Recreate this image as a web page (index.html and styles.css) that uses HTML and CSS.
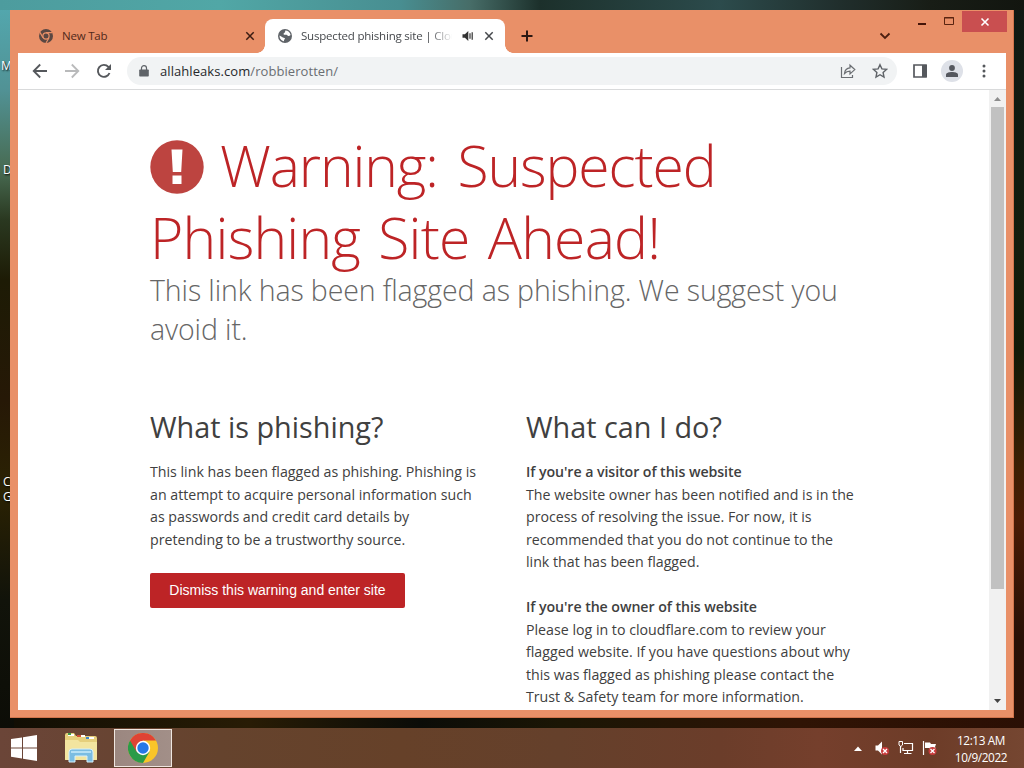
FILE: index.html
```html
<!DOCTYPE html>
<html lang="en">
<head>
  <meta charset="UTF-8" />
  <title>Suspected phishing site | Cloudflare</title>
  <link rel="stylesheet" href="styles.css">
</head>
<body>
  <!-- Desktop icon labels, mostly behind the window -->
  <span class="label label-m">M</span>
  <span class="label label-d">D</span>
  <span class="label label-c">C</span>
  <span class="label label-g">G</span>

  <div class="window">
    <div class="tabs">
      <div class="tab">
        <svg class="favicon" viewBox="0 0 16 16"><circle cx="8" cy="8" r="7" fill="#5a4742"/><circle cx="8" cy="8" r="3.1" fill="#5a4742" stroke="#e99068" stroke-width="1.2"/><path d="M8 4.6h6.2M5 9.8L2 4.4M11 9.8L8 15" stroke="#e99068" stroke-width="1.2"/></svg>
        <span class="tab-title">New Tab</span>
        <svg class="tab-close" viewBox="0 0 10 10"><path d="M1.3 1.3l7.4 7.4M8.7 1.3L1.3 8.7" stroke="#3b1c12" stroke-width="1.5"/></svg>
      </div>
      <div class="tab active">
        <svg class="favicon" viewBox="0 0 16 16"><circle cx="8" cy="8" r="7" fill="#5f6368"/><path d="M8.2 2.4c2.8 0 5 1.9 5.4 4.7-.9.7-1.5 1.1-2.4.9-.9-.2-.8-1.1-1.7-1.2H7.6c-.8 0-1.2-.7-.9-1.4.2-.6 1.3-.6 1.4-1.4zM2.6 7.5l3.3 1.9c.5.3 1.1.3 1.6.5.6.2.6 1 .1 1.3-.4.3-.6.7-.6 1.2v.9C4.3 12.8 2.3 10.5 2.6 7.5z" fill="#fff"/></svg>
        <span class="tab-title fade">Suspected phishing site | Cloudflare</span>
        <svg class="sound" viewBox="0 0 12 12"><path d="M.5 4.3h2.4L6.3 1v10L2.9 7.700H.5z" fill="#333"/><path d="M8 3.300v5.400M10.200 2.200v7.600" stroke="#333" stroke-width="1.200"/></svg>
        <svg class="tab-close" viewBox="0 0 10 10"><path d="M1.300 1.300l7.400 7.400M8.700 1.300L1.300 8.700" stroke="#45484c" stroke-width="1.500"/></svg>
      </div>
      <svg class="new-tab" viewBox="0 0 12 12"><path d="M6 .5v11M.5 6h11" stroke="#2b1712" stroke-width="2"/></svg>
      <svg class="tab-search" viewBox="0 0 12 8"><path d="M1.500 1.500L6 6l4.500-4.500" fill="none" stroke="#4c1f10" stroke-width="1.800"/></svg>
      <div class="controls">
        <svg class="min" viewBox="0 0 30 21"><path d="M4 13h8" stroke="#451408" stroke-width="2"/></svg>
        <svg class="max" viewBox="0 0 26 21"><path d="M.5 6.500h9v7h-9z M0 7h10" fill="none" stroke="#5a2410"/></svg>
        <div class="close"><svg viewBox="0 0 10 10"><path d="M1.500 1.500l7 7M8.500 1.500l-7 7" stroke="#fff" stroke-width="1.600"/></svg></div>
      </div>
    </div>

    <div class="toolbar">
      <svg class="nav" viewBox="0 0 16 16"><path d="M15 8H2M8.200 1.500L1.700 8l6.500 6.500" fill="none" stroke="#55585c" stroke-width="1.800"/></svg>
      <svg class="nav" viewBox="0 0 16 16"><path d="M1 8h13M7.800 1.500L14.300 8l-6.500 6.500" fill="none" stroke="#b9babb" stroke-width="1.800"/></svg>
      <svg class="nav" viewBox="0 0 16 16"><path d="M13.500 10A6 6 0 1 1 12.400 3.900L14 5.500" fill="none" stroke="#55585c" stroke-width="1.900"/><path d="M15 1v6H9z" fill="#55585c"/></svg>
      <div class="address">
        <svg class="lock" viewBox="0 0 10 12"><path d="M1 4.500h8q.8 0 .8.800v5.400q0 .8-.8.800H1q-.8 0-.8-.8V5.300q0-.8.8-.8z" fill="#5f6368"/><path d="M2.500 5V3.100a2.500 2.500 0 0 1 5 0V5" fill="none" stroke="#5f6368" stroke-width="1.200"/></svg>
        <span class="url">allahleaks.com<span class="path">/robbierotten/</span></span>
        <svg class="share" viewBox="0 0 16 16"><path d="M1.500 4v10.500h11V12" fill="none" stroke="#6b6e72" stroke-width="1.200"/><path d="M4.500 10.500c.4-3.600 2.400-5.400 5.500-5.600V2.200L14.800 6.600 10 11V8.200c-2.300 0-4 .6-5.500 2.300z" fill="none" stroke="#6b6e72" stroke-width="1.200"/></svg>
        <svg class="star" viewBox="0 0 16 16"><path d="M8 1.700l1.900 4.200 4.600.5-3.400 3.100.9 4.500L8 11.700 4 14l.9-4.500L1.500 6.400l4.600-.5z" fill="none" stroke="#5f6368" stroke-width="1.400"/></svg>
      </div>
      <svg class="panel" viewBox="0 0 14 14"><path d="M1 1h12v12H1z" fill="#fff" stroke="#55585d" stroke-width="1.700"/><path d="M9 1h5v12H9z" fill="#55585d"/></svg>
      <div class="avatar"><svg viewBox="0 0 12 12"><circle cx="6" cy="3" r="2.900" fill="#55585f"/><path d="M0 12V9.800C0 7.800 3 7 6 7s6 .8 6 2.800V12z" fill="#55585f"/></svg></div>
      <svg class="dots" viewBox="0 0 4 14"><g fill="#55585c"><circle cx="2" cy="2" r="1.500"/><circle cx="2" cy="7" r="1.500"/><circle cx="2" cy="12" r="1.500"/></g></svg>
    </div>

    <div class="view">
      <div class="page">
        <h1>
          <svg class="alert" viewBox="0 0 54 54"><circle cx="27" cy="27" r="26.700" fill="#bd4440"/><path d="M21.500 9.500h11l-1.300 22.500h-8.400zM22.500 35.500h9V44h-9z" fill="#fff"/></svg><span class="warn">Warning: Suspected</span><br>
          <span class="ahead">Phishing Site Ahead!</span>
        </h1>
        <h2 class="subtitle">This link has been flagged as phishing. We suggest you<br>avoid it.</h2>
        <div class="columns">
          <div class="column">
            <h2>What is phishing?</h2>
            <p>This link has been flagged as phishing. Phishing is<br>an attempt to acquire personal information such<br>as passwords and credit card details by<br>pretending to be a trustworthy source.</p>
            <button class="dismiss">Dismiss this warning and enter site</button>
          </div>
          <div class="column">
            <h2>What can I do?</h2>
            <p><strong>If you're a visitor of this website</strong><br>The website owner has been notified and is in the<br>process of resolving the issue. For now, it is<br>recommended that you do not continue to the<br>link that has been flagged.</p>
            <p><strong>If you're the owner of this website</strong><br>Please log in to cloudflare.com to review your<br>flagged website. If you have questions about why<br>this was flagged as phishing please contact the<br>Trust &amp; Safety team for more information.</p>
          </div>
        </div>
      </div>
      <div class="scrollbar">
        <svg viewBox="0 0 17 17"><path d="M5 11l3.500-4 3.500 4z" fill="#8d8d8d"/></svg>
        <div class="thumb"></div>
        <svg viewBox="0 0 17 17"><path d="M5 6l3.500 4L12 6z" fill="#444"/></svg>
      </div>
    </div>
  </div>

  <div class="taskbar">
    <svg class="start" viewBox="0 0 26 26"><path d="M0 4l11-1.600v10H0zM12 2.200L26 0v12.400H12zM0 13.400h11v10L0 21.800zM12 13.400h14V26l-14-2.200z" fill="#fff"/></svg>
    <svg class="explorer" viewBox="0 0 34 32">
      <path d="M1 3q0-2 2-2h7l2 3h19q2 0 2 2v22H1z" fill="#e6cf7c"/>
      <path d="M4 3h6M15 4h6M24 6h6" stroke="#fff" stroke-width="2"/>
      <path d="M4 2h3" stroke="#3d9b48" stroke-width="2"/><path d="M13 4h4" stroke="#cf5138" stroke-width="2"/><path d="M22 6h3" stroke="#3f86c8" stroke-width="2"/>
      <path d="M1 8h13l2 2h17v17q0 1-1 1H2q-1 0-1-1z" fill="#f3e5a0"/>
      <path d="M5 30V20q0-3 3-3h18q3 0 3 3v10h-6v-6H11v6z" fill="#7bbde2" stroke="#d7f0fb"/>
      <path d="M7 20h20" stroke="#b6e0f4" stroke-width="2"/>
    </svg>
    <div class="task">
      <svg viewBox="0 0 30 30"><circle cx="15" cy="15" r="15" fill="#f9c529"/><path d="M15 15L2 7.500A15 15 0 0 0 15 30l6.500-11.200z" fill="#2b9b48"/><path d="M2 7.500A15 15 0 0 1 28 7.500H15v7.500L8.500 18.800z" fill="#df4334"/><circle cx="15" cy="15" r="7.200" fill="#fff"/><circle cx="15" cy="15" r="5.700" fill="#2678e6"/></svg>
    </div>
    <div class="tray">
      <svg class="up" viewBox="0 0 8 5"><path d="M0 5l4-4.500L8 5z" fill="#fff"/></svg>
      <svg class="tray-icon" viewBox="0 0 16 16"><path d="M1.500 5.500H4L8 1.500v13L4 10.500H1.500z" fill="#fff"/><circle cx="11" cy="11" r="4" fill="#c83b3b"/><path d="M9 9l4 4M13 9l-4 4" stroke="#fff" stroke-width="1.300"/></svg>
      <svg class="tray-icon" viewBox="0 0 16 16"><path d="M6 3.500h8.500v7H5V8M9.500 10.500V13M6 13.500h7.500M2.500 6v7" fill="none" stroke="#fff" stroke-width="1.200"/><path d="M1 1.500h3.500V5L2.800 6.500 1 5z" fill="none" stroke="#fff"/></svg>
      <svg class="tray-icon" viewBox="0 0 16 16"><path d="M1.500 1v14" stroke="#fff" stroke-width="1.200"/><path d="M3 2.500h5l1 1.500h5l-1 3 1 2H8L7 8H3z" fill="#fff"/><circle cx="10.500" cy="11" r="4" fill="#c83b3b"/><path d="M8.500 9l4 4M12.500 9l-4 4" stroke="#fff" stroke-width="1.300"/></svg>
      <div class="clock">12:13 AM<br>10/9/2022</div>
    </div>
  </div>
</body>
</html>
```
FILE: styles.css
```css
* {
  margin: 0;
  padding: 0;
  box-sizing: border-box;
}

html, body {
  height: 100%;
}

body {
  display: flex;
  flex-direction: column;
  padding: 10px 10px 0;
  overflow: hidden;
  font-family: "Open Sans", "Noto Sans", sans-serif;
  background:
    linear-gradient(90deg, #4d9c9e 0, #51a7a6 220px, #488e91 400px, #476d68 470px, #1c302b 540px, #2c4b4c 720px, #202e2c 840px, #181d16 930px, #12150f 1024px) 0 0 / 100% 10px no-repeat,
    linear-gradient(180deg, #53a9b0 0, #519295 90px, #486b52 170px, #2a3820 220px, #1d1b05 280px, #261806 400px, #2b2203 490px, #11130a 600px, #0b0b06 768px) 0 0 / 14px 100% no-repeat,
    linear-gradient(180deg, #101914 0, #131d0d 250px, #111a07 350px, #3e1f03 470px, #4a1c05 520px, #281006 640px, #2c1005 768px) 100% 0 / 14px 100% no-repeat,
    linear-gradient(90deg, #100d04, #281c05 250px, #0b0c08 420px, #1b1605 560px, #301405 800px, #2b0f04);
}

svg {
  display: block;
  flex: none;
}

.label {
  position: absolute;
  left: 3px;
  font-size: 12px;
  line-height: 14px;
  color: #fff;
  text-shadow: 1px 1px 2px #000;
}

.label-m { top: 59px; left: 1px; }
.label-d { top: 163px; }
.label-c { top: 475px; }
.label-g { top: 490px; }

.window {
  position: relative;
  display: flex;
  flex-direction: column;
  width: 1004px;
  height: 708px;
  padding: 9px 7px 7px 8px;
  background: #e99068;
  border: 1px solid #d0744c;
  border-width: 0 1px 1px 0;
}

/* Tab strip */
.tabs {
  display: flex;
  align-items: center;
  height: 34px;
  flex: none;
}

.tab {
  display: flex;
  align-items: center;
  width: 247px;
  height: 34px;
  padding: 0 10px 0 20px;
  color: #51291b;
}

.favicon {
  width: 16px;
  height: 16px;
}

.tab-title {
  flex: 1;
  margin-left: 8px;
  padding-bottom: 1px;
  font-size: 11.5px;
  letter-spacing: -0.2px;
  white-space: nowrap;
  overflow: hidden;
}

.tab-close {
  width: 10px;
  height: 10px;
}

.tab.active {
  position: relative;
  width: 240px;
  padding: 0 11px 0 12px;
  background: #fff;
  border-radius: 8px 8px 0 0;
  color: #45484c;
}

/* curved feet of the active tab */
.tab.active::before,
.tab.active::after {
  content: "";
  position: absolute;
  bottom: 0;
  width: 8px;
  height: 8px;
}

.tab.active::before {
  left: -8px;
  background: radial-gradient(circle at 0 0, transparent 7.5px, #fff 8px);
}

.tab.active::after {
  right: -8px;
  background: radial-gradient(circle at 100% 0, transparent 7.5px, #fff 8px);
}

.fade {
  -webkit-mask-image: linear-gradient(90deg, #000 128px, transparent 152px);
  mask-image: linear-gradient(90deg, #000 128px, transparent 152px);
}

.sound {
  width: 12px;
  height: 12px;
  margin: 0 10px;
}

.new-tab {
  width: 12px;
  height: 12px;
  margin-left: 16px;
}

.tab-search {
  width: 12px;
  height: 8px;
  margin-left: auto;
  margin-right: 23px;
}

.controls {
  display: flex;
  align-self: flex-start;
  height: 21px;
  margin-top: -8px;
  margin-right: -1px;
}

.min {
  width: 30px;
  height: 21px;
}

.max {
  width: 26px;
  height: 21px;
  margin-right: -8px;
}

.close {
  display: flex;
  align-items: center;
  justify-content: center;
  width: 45px;
  background: #c94f50;
}

.close svg {
  width: 10px;
  height: 10px;
}

/* Toolbar */
.toolbar {
  display: flex;
  align-items: center;
  height: 37px;
  flex: none;
  padding: 0 20px 0 14px;
  background: #fff;
  border-bottom: 1px solid #d9dadb;
}

.nav {
  width: 16px;
  height: 16px;
  margin-right: 16px;
}

.address {
  display: flex;
  align-items: center;
  width: 770px;
  height: 28px;
  margin-left: -1px;
  padding: 0 9px 0 12px;
  background: #f1f3f4;
  border-radius: 14px;
}

.lock {
  width: 10px;
  height: 12px;
}

.url {
  flex: 1;
  margin-left: 11px;
  font-size: 13px;
  letter-spacing: 0.07px;
  color: #26282b;
}

.path {
  color: #6a6e72;
}

.share,
.star {
  width: 16px;
  height: 16px;
}

.star {
  margin-left: 16px;
}

.panel {
  width: 14px;
  height: 14px;
  margin-left: 16px;
}

.avatar {
  display: flex;
  align-items: center;
  justify-content: center;
  width: 22px;
  height: 22px;
  margin-left: 14px;
  border-radius: 50%;
  background: #dee1e8;
}

.avatar svg {
  width: 12px;
  height: 12px;
}

.dots {
  width: 4px;
  height: 14px;
  margin-left: auto;
}

/* Page */
.view {
  display: flex;
  flex: 1;
  min-height: 0;
  background: #fff;
}

.page {
  flex: 1;
  padding: 39px 0 0 132px;
  overflow: hidden;
  white-space: nowrap;
  color: #404040;
}

h1 {
  font-size: 57px;
  line-height: 72px;
  font-weight: 300;
  letter-spacing: -1.1px;
  word-spacing: 6px;
  color: #bd2426;
}

.ahead {
  letter-spacing: -0.75px;
  word-spacing: 4px;
}

.alert {
  display: inline-block;
  width: 54px;
  height: 54px;
  margin-right: 16px;
  vertical-align: -7px;
}

.subtitle {
  margin-top: -2px;
  font-size: 28.5px;
  line-height: 39px;
  font-weight: 300;
  letter-spacing: -0.11px;
  color: #666;
}

.columns {
  display: flex;
  margin-top: 58px;
}

.column {
  width: 376px;
}

.column h2 {
  font-size: 28.8px;
  line-height: 39px;
  font-weight: 400;
  letter-spacing: 0;
}

.column p {
  margin-bottom: 22.5px;
  font-size: 14.2px;
  line-height: 22.5px;
}

.column h2 + p {
  margin-top: 15.4px;
}

.column strong {
  font-weight: 600;
  letter-spacing: -0.07px;
}

.dismiss {
  display: block;
  width: 255px;
  height: 35px;
  margin-top: -1px;
  border: 0;
  border-radius: 2px;
  background: #bd2426;
  color: #fff;
  font-family: "Liberation Sans", Arial, sans-serif;
  font-size: 14px;
}

.scrollbar {
  display: flex;
  flex-direction: column;
  width: 17px;
  background: #f1f1f1;
}

.scrollbar svg {
  width: 17px;
  height: 17px;
}

.thumb {
  height: 482px;
  width: 13px;
  margin: 0 2px auto;
  background: #c1c1c1;
}

/* Taskbar */
.taskbar {
  display: flex;
  align-items: center;
  height: 40px;
  flex: none;
  margin: 10px -10px 0;
  padding: 0 14px 0 11px;
  background: linear-gradient(90deg, #6b4538, #65432d 220px, #664129 400px, #65402b 560px, #6b3d2a 720px, #753f2c 820px, #6d3c28 930px, #754631);
}

.start {
  width: 26px;
  height: 26px;
}

.explorer {
  width: 34px;
  height: 32px;
  margin-left: 27px;
}

.task {
  display: flex;
  align-items: center;
  justify-content: center;
  width: 58px;
  height: 38px;
  margin-left: 16px;
  background: linear-gradient(90deg, #9b8780, #a28f88);
  border: 1px solid #efe6e0;
}

.task svg {
  width: 30px;
  height: 30px;
}

.tray {
  display: flex;
  align-items: center;
  margin-left: auto;
}

.up {
  width: 8px;
  height: 5px;
  margin-right: 12px;
}

.tray-icon {
  width: 16px;
  height: 16px;
  margin-right: 8px;
}

.clock {
  width: 58px;
  margin-left: 6px;
  padding-top: 1px;
  font-size: 11.8px;
  line-height: 17px;
  letter-spacing: -0.4px;
  text-align: center;
  white-space: nowrap;
  color: #fff;
}
```
